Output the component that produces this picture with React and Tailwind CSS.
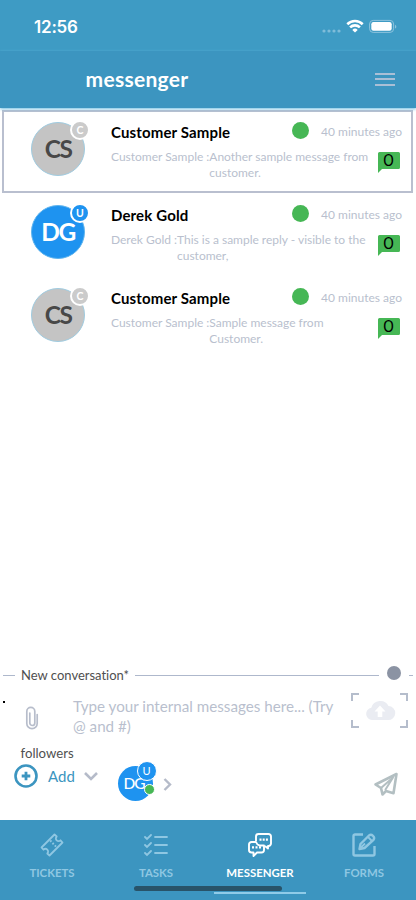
import React, { useState } from "react";

const conversations = [
  {
    id: 1,
    name: "Customer Sample",
    initials: "CS",
    type: "C",
    lines: ["Another sample message from", "customer."],
    time: "40 minutes ago",
  },
  {
    id: 2,
    name: "Derek Gold",
    initials: "DG",
    type: "U",
    lines: ["This is a sample reply - visible to the", "customer,"],
    time: "40 minutes ago",
  },
  {
    id: 3,
    name: "Customer Sample",
    initials: "CS",
    type: "C",
    lines: ["Sample message from", "Customer."],
    time: "40 minutes ago",
  },
];

function StatusBar() {
  return (
    <div className="h-[51px] bg-[#3e9bc4] flex items-start justify-between pl-[34px] pr-[19px]">
      <span className="mt-[15px] font-['Inter',sans-serif] text-[17px] leading-6 font-semibold text-white tracking-[-0.2px]">
        12:56
      </span>
      <div className="flex mt-[19px]">
        <svg width="19" height="16" viewBox="0 0 19 16" fill="#7fbcd9">
          <circle cx="2" cy="12" r="1.6" />
          <circle cx="7" cy="12" r="1.6" />
          <circle cx="12" cy="12" r="1.6" />
          <circle cx="17" cy="12" r="1.6" />
        </svg>
        <svg className="ml-[5px]" width="18" height="14" viewBox="0 0 18 14" fill="none" stroke="white" strokeWidth="2.6">
          <path d="M1.3 5.2a11 11 0 0 1 15.4 0" />
          <path d="M4.1 8.4a7 7 0 0 1 9.8 0" />
          <path d="M9 13.6l-2.7-2.7a3.9 3.9 0 0 1 5.4 0z" fill="white" stroke="none" />
        </svg>
        <svg className="ml-[5px]" width="28" height="14" viewBox="0 0 28 14">
          <rect x="0.6" y="1.4" width="24" height="12" rx="3.6" fill="none" stroke="#8cc3dd" strokeWidth="1" />
          <rect x="2.3" y="3" width="20.4" height="8.8" rx="2.2" fill="white" />
          <path d="M26 5.8v3.8q1.3-.6 1.3-1.9T26 5.8z" fill="#8cc3dd" />
        </svg>
      </div>
    </div>
  );
}

function Header() {
  return (
    <div className="h-[57px] bg-[#3c95c0] shadow-[0_1px_3px_#6bbce0] flex items-center justify-between pl-[85.5px] pr-[21px] relative">
      <h1 className="-mt-[2px] text-[21px] leading-6 font-bold text-white tracking-[0.3px]">
        messenger
      </h1>
      <button className="-mt-px flex flex-col gap-[3.5px]">
        <span className="block h-[2px] w-5 bg-[#a9bfd6]" />
        <span className="block h-[2px] w-5 bg-[#a9bfd6]" />
        <span className="block h-[2px] w-5 bg-[#a9bfd6]" />
      </button>
    </div>
  );
}

function Avatar({ initials, type }) {
  const isUser = type === "U";
  return (
    <div
      className={`relative size-[54px] shrink-0 rounded-full border flex items-center justify-center font-bold text-[24.5px] tracking-[-1.5px] ${
        isUser
          ? "bg-[#1e93f0] border-[#5fb4ee] text-white"
          : "bg-[#c4c4c4] border-[#9fcbe0] text-[#484848]"
      }`}
    >
      {initials}
      <span
        className={`absolute -top-[3px] left-[38px] size-[20px] rounded-full border-2 border-white flex items-center justify-center text-[10.5px] leading-none tracking-normal text-white ${
          isUser ? "bg-[#1e93f0]" : "bg-[#cbcbcb]"
        }`}
      >
        {type}
      </span>
    </div>
  );
}

function OpenFlag() {
  return (
    <div className="relative h-[21px] w-[22px]">
      <svg width="22" height="21" viewBox="0 0 22 21">
        <path d="M1.5 0h19A1.5 1.5 0 0 1 22 1.5v14a1.5 1.5 0 0 1-1.5 1.5H4L0 21V1.5A1.5 1.5 0 0 1 1.5 0z" fill="#46b755" />
      </svg>
      <span className="absolute inset-x-0 top-0 pr-px text-center font-['Roboto',sans-serif] text-[16px] leading-[18px] text-black">
        O
      </span>
    </div>
  );
}

function Conversation({ item, active }) {
  return (
    <div
      className={`flex h-[83px] border-2 pl-[27px] pt-[10px] ${
        active ? "border-[#b9bfcf]" : "border-transparent"
      }`}
    >
      <Avatar initials={item.initials} type={item.type} />
      <div className="ml-[26px] flex-1">
        <div className="flex items-center h-5">
          <h2 className="w-[181px] text-[15px] leading-5 font-bold text-black tracking-[0.14px] whitespace-nowrap">
            {item.name}
          </h2>
          <span className="-mt-[3px] size-[17px] rounded-full bg-[#46b755]" />
          <span className="flex-1 pr-[9px] text-right text-[12px] text-[#b9bfce] whitespace-nowrap">
            {item.time}
          </span>
        </div>
        <div className="flex mt-[7px] text-[12px] leading-4 text-[#b9bfce] tracking-[-0.01px] whitespace-nowrap">
          <span>{item.name} :</span>
          <span className="flex-1">
            {item.lines[0]}
            <br />
            {item.lines[1]}
          </span>
          <div className="mt-[3px] mr-[11px]">
            <OpenFlag />
          </div>
        </div>
      </div>
    </div>
  );
}

function Composer() {
  return (
    <div className="h-[155px]">
      {/* section title */}
      <div className="flex items-center h-5 pl-[3px]">
        <span className="h-px w-3 bg-[#aeb8cc]" />
        <span className="ml-[6px] text-[13px] leading-5 text-[#505050] whitespace-nowrap">
          New conversation*
        </span>
        <span className="ml-[6px] h-px flex-1 bg-[#aeb8cc]" />
        <span className="ml-2 -mt-[5px] size-[14px] rounded-full bg-[#8b93a3]" />
        <span className="ml-2 mr-[3px] h-px w-1 bg-[#aeb8cc]" />
      </div>

      {/* message */}
      <div className="flex h-[57px] pt-2">
        <span className="ml-[3px] mt-2 size-[2px] bg-black" />
        <svg className="ml-5 mt-[13px]" width="14" height="25" viewBox="0 0 14 25" fill="none" stroke="#b7bdcb" strokeWidth="1.7" strokeLinecap="round">
          <path d="M12.2 8.5v9a5.2 5.2 0 0 1-10.4 0V5.4a4 4 0 0 1 8 0v11.6a2.5 2.5 0 0 1-5 0V7" />
        </svg>
        <p className="ml-[34px] mt-[4px] w-[278px] text-[15.2px] leading-[19.5px] text-[#b9bfce] whitespace-nowrap">
          Type your internal messages here... (Try
          <br />@ and #)
        </p>
        <svg className="shrink-0" width="57" height="35" viewBox="0 0 57 35">
          <path d="M1 8V1h7M49 1h7v7M56 27v7h-7M8 34H1v-7" fill="none" stroke="#b5bdcc" strokeWidth="2" />
          <path d="M21 27a6.2 6.2 0 0 1-.7-12.300 9.300 9.300 0 0 1 17.200-1.700A7 7 0 0 1 37 27z" fill="#eaecf2" />
          <path d="M29 12.5l-5.500 6h3.200V24h4.600v-5.500h3.200z" fill="white" />
        </svg>
      </div>

      {/* followers */}
      <p className="pl-[20.5px] pt-px text-[13.2px] leading-5 text-[#505050]">followers</p>
      <div className="flex h-11 pl-[14px]">
        <svg className="mt-px" width="24" height="24" viewBox="0 0 24 24" fill="none" stroke="#3c95c0">
          <circle cx="12" cy="12" r="10.5" strokeWidth="2.6" />
          <path d="M12 7.7v8.6M7.700 12h8.600" strokeWidth="2.8" />
        </svg>
        <span className="ml-[10px] mt-[2px] w-[28px] text-[15px] leading-[22px] text-[#3c95c0]">Add</span>
        <svg className="ml-2 mt-[9px]" width="14" height="9" viewBox="0 0 14 9" fill="none" stroke="#b5bbc9" strokeWidth="2.6">
          <path d="M1 1l6 6 6-6" />
        </svg>
        <div className="relative ml-[19.5px] mt-[2.5px] size-[35px] rounded-full bg-[#1e93f0] text-white">
          <span className="block pl-[6px] text-[15.5px] font-medium leading-[35px] tracking-[-1px]">DG</span>
          <span className="absolute -top-[5px] left-[19px] size-5 rounded-full border border-white bg-[#1e93f0] text-center text-[11px] leading-[18px]">
            U
          </span>
          <span className="absolute top-[18px] left-[26px] size-[11px] rounded-full border border-white bg-[#46b755]" />
        </div>
        <svg className="ml-[10px] mt-[15px]" width="9" height="13" viewBox="0 0 9 13" fill="none" stroke="#b5bbc9" strokeWidth="2.4">
          <path d="M1.5 1l5.500 5.500L1.500 12" />
        </svg>
        <svg className="ml-auto mr-[17px] mt-[9px]" width="26" height="26" viewBox="0 0 26 26" fill="none" stroke="#b3bfc2" strokeWidth="2.6" strokeLinejoin="round" strokeLinecap="round">
          <path d="M23.5 2L2.500 12.500l5.500 3.500 1.500 6.500 3.500-3.500 7.500 2.200z" />
          <path d="M8 16L20 5.500 12.500 17.500" strokeWidth="2" />
        </svg>
      </div>
    </div>
  );
}

function TicketIcon() {
  return (
    <svg width="24" height="24" viewBox="0 0 24 24" fill="none" stroke="currentColor" strokeWidth="1.8" strokeLinejoin="round">
      <path d="M1.5 14.500L14.500 1.500l2.200 2a2.600 2.600 0 0 0 3.800 3.800l2 2.200-13 13-2.200-2a2.600 2.600 0 0 0-3.800-3.800z" />
      <path d="M10.2 7.500l1.200 1.200M12.500 10l1.200 1.200M14.800 12.400l1.200 1.200" strokeWidth="2" />
    </svg>
  );
}

function TasksIcon() {
  return (
    <svg width="24" height="24" viewBox="0 0 24 24" fill="none" stroke="currentColor" strokeWidth="1.8" strokeLinecap="round">
      <path d="M1 4l2 2 4-4M1 12l2 2 4-4M1 20l2 2 4-4M11 4h12M11 12h12M11 20h12" />
    </svg>
  );
}

function ChatIcon() {
  return (
    <svg width="24" height="24" viewBox="0 0 24 24" fill="none" stroke="currentColor" strokeWidth="1.9" strokeLinejoin="round">
      <path d="M8 8V3.500A2.500 2.500 0 0 1 10.500 1h10A2.500 2.500 0 0 1 23 3.500v7a2.500 2.500 0 0 1-2.500 2.500H20v2.500L17 13" />
      <path d="M3.500 9H8q1 2.800 3.500 3.500H16V17a2.500 2.500 0 0 1-2.500 2.500H9L5.500 23v-3.500h-2A2.500 2.500 0 0 1 1 17v-5.500A2.500 2.500 0 0 1 3.500 9z" />
      <path d="M11.500 6.700h2M14.700 6.700h2M17.900 6.700h2M4 14.300h2M7.500 14.300h2M11 14.300h2" strokeWidth="2.2" />
    </svg>
  );
}

function FormsIcon() {
  return (
    <svg width="24" height="24" viewBox="0 0 24 24" fill="none" stroke="currentColor" strokeWidth="2.4" strokeLinejoin="round">
      <path d="M11 1.500H3A1.500 1.500 0 0 0 1.500 3v18A1.500 1.500 0 0 0 3 22.500h18a1.500 1.500 0 0 0 1.500-1.500v-8" />
      <path d="M7.500 16l1-5L17 2.500q2-1.500 4 .3t.5 4L12.500 15z" />
      <path d="M8 15.500l5-5M16 4l4 4" strokeWidth="1.8" />
    </svg>
  );
}

const tabs = [
  { id: "tickets", label: "TICKETS", Icon: TicketIcon },
  { id: "tasks", label: "TASKS", Icon: TasksIcon },
  { id: "messenger", label: "MESSENGER", Icon: ChatIcon },
  { id: "forms", label: "FORMS", Icon: FormsIcon },
];

function TabBar({ activeTab, onSelect }) {
  return (
    <div className="relative grid grid-cols-4 h-20 bg-[#3c95c0]">
      {tabs.map(({ id, label, Icon }) => (
        <button
          key={id}
          onClick={() => onSelect(id)}
          className={`flex flex-col items-center pt-[13px] ${
            activeTab === id ? "text-white" : "text-[#8fc7e2]"
          }`}
        >
          <Icon />
          <span className="mt-2 text-[11.4px] leading-4 font-bold">{label}</span>
          {activeTab === id && (
            <span className="mt-[11px] h-[2px] w-[92px] bg-[#8fcbe8]" />
          )}
        </button>
      ))}

      {/* home indicator */}
      <span className="absolute bottom-[9px] left-[134px] h-[5px] w-[148px] rounded-full bg-[#285369]" />
    </div>
  );
}

export default function App() {
  const [activeTab, setActiveTab] = useState("messenger");

  return (
    <div className="flex flex-col w-[416px] h-[900px] overflow-hidden bg-white font-['Lato',sans-serif] [font-variant-ligatures:none]">
      <StatusBar />
      <Header />

      <div className="flex-1 pt-[2px] pl-[2px] pr-[3px]">
        {conversations.map((item, i) => (
          <Conversation key={item.id} item={item} active={i === 0} />
        ))}
      </div>

      <Composer />
      <TabBar activeTab={activeTab} onSelect={setActiveTab} />
    </div>
  );
}
